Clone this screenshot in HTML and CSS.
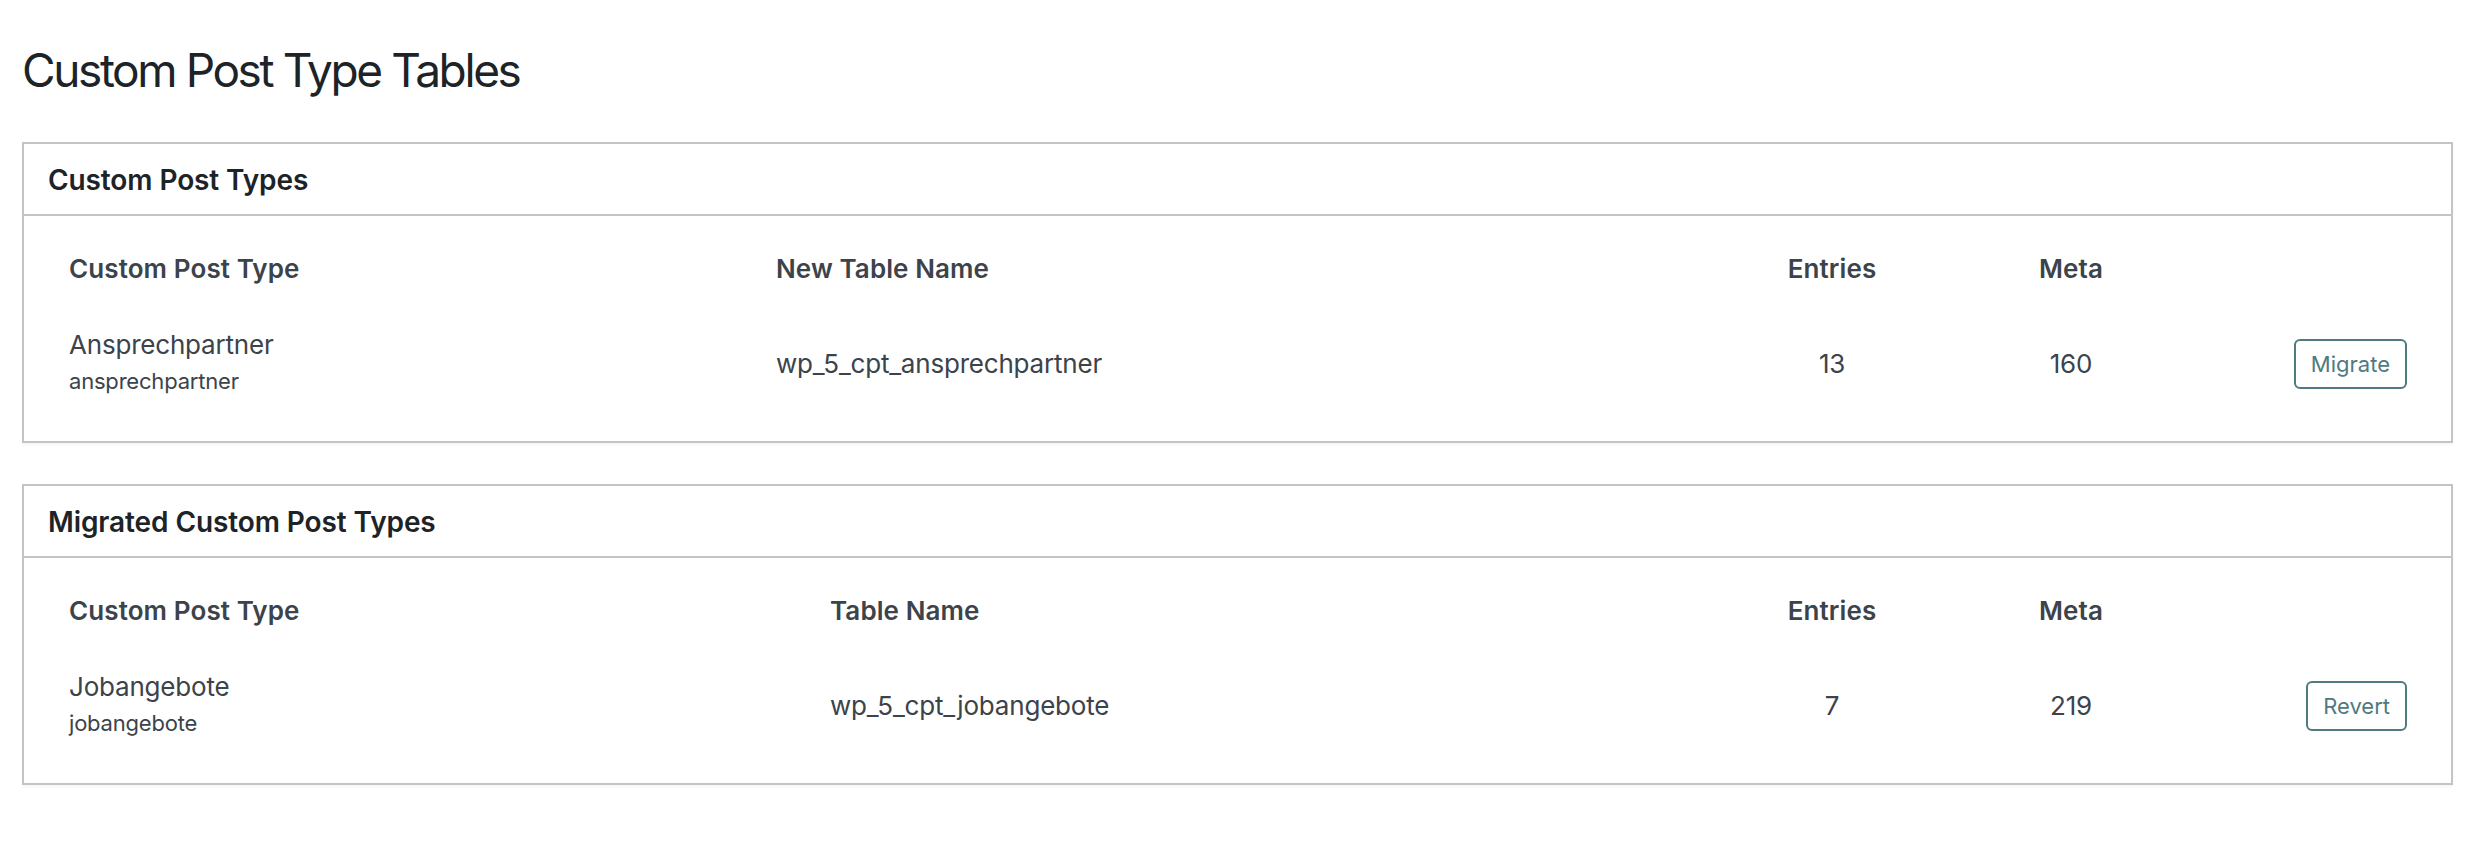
FILE: index.html
```html
<!DOCTYPE html>
<html lang="de">
<head>
<meta charset="utf-8">
<title>Custom Post Type Tables</title>
<link rel="stylesheet" href="styles.css">
</head>
<body>
<div class="wrap">
  <h1 class="page-title">Custom Post Type Tables</h1>

  <section class="panel">
    <h2 class="panel-title">Custom Post Types</h2>
    <div class="cpt-table cpt-table--pending">
      <div class="th">Custom Post Type</div>
      <div class="th">New Table Name</div>
      <div class="th center">Entries</div>
      <div class="th center">Meta</div>
      <div class="th"></div>

      <div class="td name-cell">
        <span class="label">Ansprechpartner</span>
        <span class="slug">ansprechpartner</span>
      </div>
      <div class="td">wp_5_cpt_ansprechpartner</div>
      <div class="td center">13</div>
      <div class="td center">160</div>
      <div class="td action"><button class="btn" type="button">Migrate</button></div>
    </div>
  </section>

  <section class="panel">
    <h2 class="panel-title">Migrated Custom Post Types</h2>
    <div class="cpt-table cpt-table--migrated">
      <div class="th">Custom Post Type</div>
      <div class="th">Table Name</div>
      <div class="th center">Entries</div>
      <div class="th center">Meta</div>
      <div class="th"></div>

      <div class="td name-cell">
        <span class="label">Jobangebote</span>
        <span class="slug">jobangebote</span>
      </div>
      <div class="td">wp_5_cpt_jobangebote</div>
      <div class="td center">7</div>
      <div class="td center">219</div>
      <div class="td action"><button class="btn" type="button">Revert</button></div>
    </div>
  </section>
</div>
</body>
</html>
```
FILE: styles.css
```css
* { box-sizing: border-box; }

html, body {
  margin: 0;
  padding: 0;
  background: #ffffff;
}

body {
  font-family: Inter, "Noto Sans", "Liberation Sans", sans-serif;
  color: #3c434a;
}

.wrap {
  padding: 42px 29px 60px 22px;
}

.page-title {
  margin: 0 0 44px 0;
  font-size: 46px;
  line-height: 56px;
  font-weight: 400;
  color: #1d2327;
  letter-spacing: -2.4px;
}

.panel {
  border: 2px solid #c3c4c7;
  background: #fff;
  box-shadow: 0 2px 2px rgba(0, 0, 0, 0.04);
  margin-bottom: 41px;
}

.panel-title {
  margin: 0;
  padding: 16px 24px 14px;
  font-size: 28px;
  line-height: 40px;
  font-weight: 600;
  color: #1d2327;
  border-bottom: 2px solid #c3c4c7;
  letter-spacing: -0.1px;
}

.cpt-table {
  display: grid;
  align-items: center;
  row-gap: 40px;
  padding: 35px 44px 41px 45px;
  font-size: 26px;
  line-height: 36px;
}

.cpt-table--pending {
  grid-template-columns: 707px 1fr 160px 318px 177px;
}

.cpt-table--migrated {
  grid-template-columns: 761px 1fr 160px 318px 177px;
}

.th {
  font-weight: 600;
  color: #3c434a;
  letter-spacing: 0.1px;
}

.td {
  color: #3c434a;
  letter-spacing: -0.2px;
}

.center { text-align: center; }

.name-cell {
  display: flex;
  flex-direction: column;
}

.label {
  font-size: 26px;
  line-height: 36px;
}

.slug {
  font-size: 22px;
  line-height: 37px;
  color: #3c434a;
}

.action {
  display: flex;
  justify-content: flex-end;
}

.btn {
  font-family: inherit;
  font-size: 22px;
  height: 50px;
  line-height: 46px;
  padding: 0 15px;
  background: #fff;
  color: #4f7a80;
  border: 2px solid #4f7a80;
  border-radius: 6px;
  cursor: pointer;
}
```
